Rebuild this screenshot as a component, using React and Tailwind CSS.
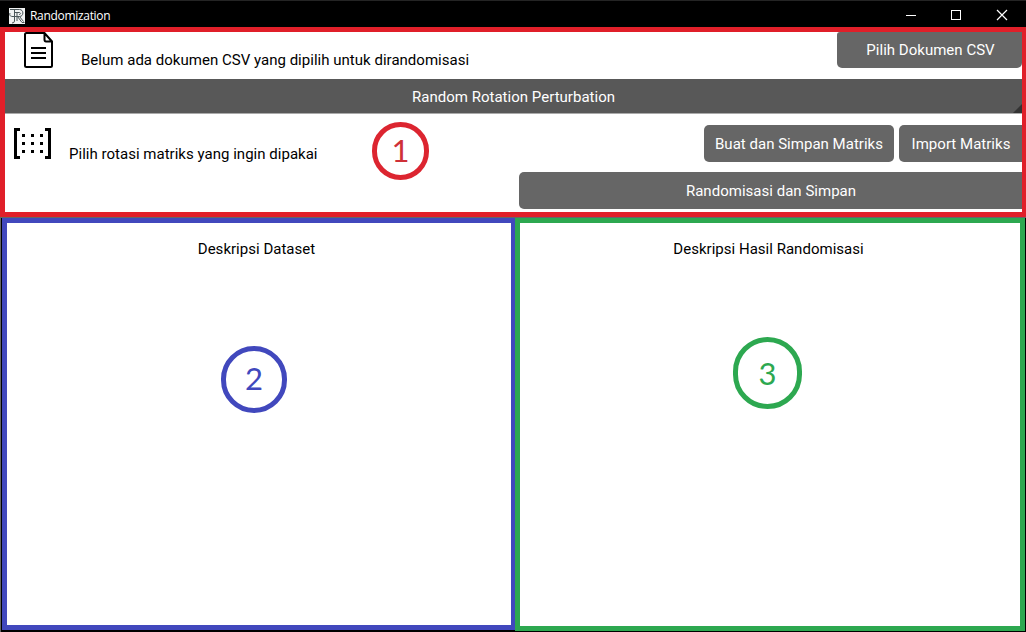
function Logo() {
  return (
    <svg width="16" height="16" viewBox="0 0 16 16" className="shrink-0" fill="none">
      <rect width="16" height="16" fill="#f1f3f3" />
      <path d="M1 1.500H10.500C15 1.500 15 8.500 10.500 8.500H3M5.500 1.500V13Q5.500 15 3 15M8 4.500V13M5.500 4.500H10C12 4.500 12 6.500 10 6.500M8.500 8.500L13 14.500H15.500M10.500 8.500L14.500 13.500M1 5C0 8 2 8.500 4 8.500" stroke="#4b5659" strokeWidth="1" />
    </svg>
  );
}

function DocumentIcon() {
  return (
    <svg width="30" height="37" viewBox="0 0 30 37" className="ml-[19px] block shrink-0" fill="none" stroke="#000" strokeWidth="2">
      <path d="M20.500 1H2.500Q1 1 1 2.500V33.500Q1 35 2.500 35H26.500Q28 35 28 33.500V9.500ZM20.500 1V7.500Q20.500 9.500 22 9.500H28" />
      <path d="M7 16H22M7 21H22M7 26H22" />
    </svg>
  );
}

function MatrixIcon() {
  return (
    <svg width="38" height="31" viewBox="0 0 38 31" className="ml-[9px] block shrink-0" shapeRendering="crispEdges">
      <path d="M6 1.500H1.500V29.500H6M31 1.500H35.500V29.500H31" fill="none" stroke="#000" strokeWidth="3" />
      {[6, 14, 22].map((y) => [8, 17, 26].map((x) => <rect key={`${x}-${y}`} x={x} y={y} width="3" height="3" fill="#000" />))}
    </svg>
  );
}

function Panel({ title, className, titleClassName, children }) {
  return (
    <section className={`relative border-[5px] bg-white pt-[16px] text-center ${className}`}>
      <h2 className={`leading-5 ${titleClassName}`}>{title}</h2>
      {children}
    </section>
  );
}

export default function App() {
  return (
    <div className="flex h-[632px] w-[1026px] flex-col overflow-hidden bg-black font-['Roboto',sans-serif] text-[15px] tracking-[0.02px] text-black">
      <header className="flex h-[27px] shrink-0 items-start border-t border-[#242424] pl-[9px] text-white">
        <div className="flex h-[29px] items-center">
          <Logo />
          <span className="ml-[5px] font-['Open_Sans',sans-serif] text-[12px] tracking-[-0.31px]">Randomization</span>
        </div>
        <svg width="106" height="12" viewBox="0 0 106 12" className="mt-[8px] mr-[17px] ml-auto" fill="none" stroke="#fff">
          <path d="M3 6.500H13M48.500 1.500H57.500V10.500H48.500Z" shapeRendering="crispEdges" />
          <path d="M94 1L104 11M104 1L94 11" strokeWidth="1.200" />
        </svg>
      </header>

      <section className="relative flex h-[190px] shrink-0 flex-col border-y-[5px] border-r-[4px] border-l-[5px] border-[#e01f29] bg-white">
        <div className="flex h-[47px] shrink-0 items-start">
          <DocumentIcon />
          <span className="mt-[18px] ml-[27px] leading-5">Belum ada dokumen CSV yang dipilih untuk dirandomisasi</span>
          <button className="ml-auto h-[36px] w-[185px] rounded-b-[5px] rounded-tl-[3px] bg-[#666] pl-[2px] text-white">Pilih Dokumen CSV</button>
        </div>
        <div className="relative flex h-[35px] shrink-0 items-center justify-center border-b border-[#aaa] bg-[#585858] pt-[2px] text-white">
          Random Rotation Perturbation
          <svg width="9" height="9" className="absolute right-0 bottom-0"><path d="M9 0V9H0Z" fill="#333" /></svg>
        </div>
        <div className="flex h-[58px] shrink-0 items-start pt-[11px]">
          <div className="mt-[3px]"><MatrixIcon /></div>
          <span className="mt-[19px] ml-[17px] leading-5">Pilih rotasi matriks yang ingin dipakai</span>
          <div className="ml-auto flex gap-[5px] text-white">
            <button className="h-[37px] w-[190px] rounded-[5px] bg-[#666] pt-[2px]">Buat dan Simpan Matriks</button>
            <button className="h-[37px] w-[123px] rounded-l-[5px] bg-[#666] pt-[2px] pl-px">Import Matriks</button>
          </div>
        </div>
        <button className="h-[37px] w-[503px] self-end rounded-l-[5px] bg-[#666] pt-[2px] pl-px text-white">Randomisasi dan Simpan</button>
        <div className="absolute top-[90px] left-[367px] flex h-[58px] w-[57px] items-center justify-center rounded-full border-[5px] border-[#dc2530] pb-[2px] font-['Lato',sans-serif] text-[31px] leading-none text-[#cf3038]">1</div>
      </section>

      <div className="flex h-[415px] border-t border-l border-[#666] bg-black pl-px">
        <Panel title="Deskripsi Dataset" titleClassName="pr-[5px]" className="h-[412px] w-[513px] border-r-[4px] border-[#4148bd]">
          <div className="absolute top-[123px] left-[214px] flex h-[67px] w-[66px] items-center justify-center rounded-full border-[5px] border-[#4148bd] pb-[2px] font-['Lato',sans-serif] text-[31px] leading-none text-[#4148bd]">2</div>
        </Panel>
        <Panel title="Deskripsi Hasil Randomisasi" titleClassName="pr-[3px]" className="h-[413px] w-[510px] border-[#2da850]">
          <div className="absolute top-[114px] left-[213px] flex h-[72px] w-[69px] items-center justify-center rounded-full border-[5px] border-[#2da850] font-['Lato',sans-serif] text-[31px] leading-none text-[#2da850]">3</div>
        </Panel>
      </div>
    </div>
  );
}
